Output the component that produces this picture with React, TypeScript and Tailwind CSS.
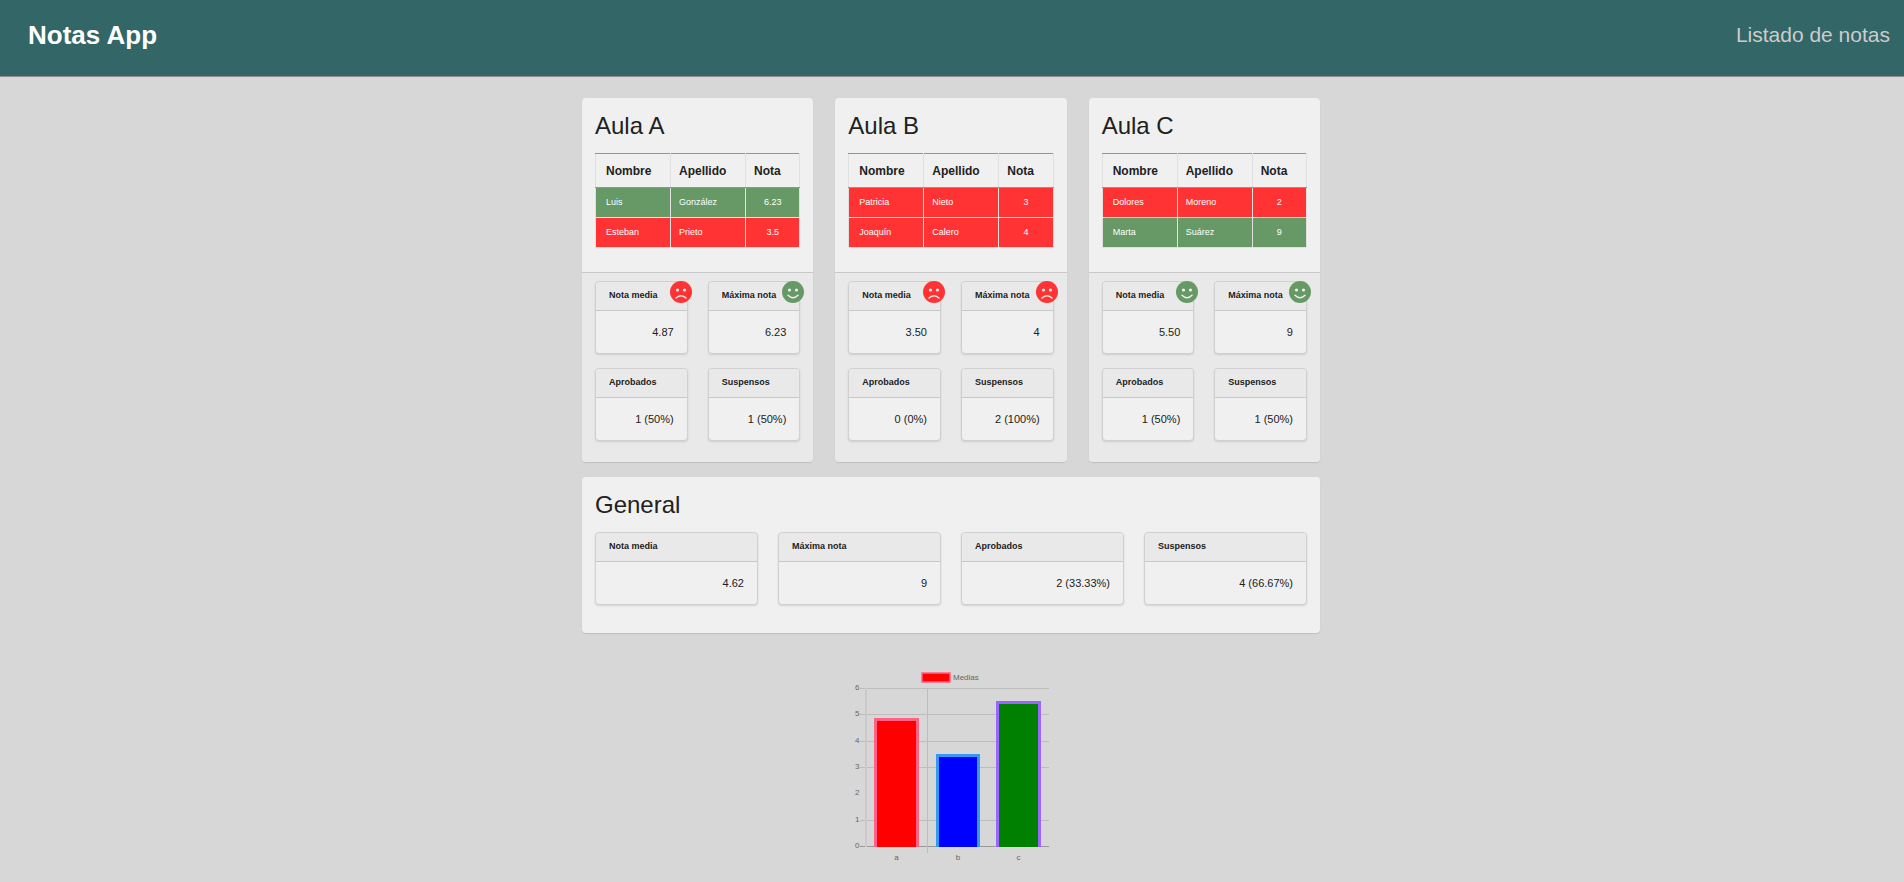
type Student = { name: string; surname: string; grade: number };
type Stat = { label: string; value: string; mood?: "happy" | "sad" };
type Classroom = { title: string; students: Student[]; stats: Stat[] };

const classrooms: Classroom[] = [
  {
    title: "Aula A",
    students: [
      { name: "Luis", surname: "González", grade: 6.23 },
      { name: "Esteban", surname: "Prieto", grade: 3.5 },
    ],
    stats: [
      { label: "Nota media", value: "4.87", mood: "sad" },
      { label: "Máxima nota", value: "6.23", mood: "happy" },
      { label: "Aprobados", value: "1 (50%)" },
      { label: "Suspensos", value: "1 (50%)" },
    ],
  },
  {
    title: "Aula B",
    students: [
      { name: "Patricia", surname: "Nieto", grade: 3 },
      { name: "Joaquín", surname: "Calero", grade: 4 },
    ],
    stats: [
      { label: "Nota media", value: "3.50", mood: "sad" },
      { label: "Máxima nota", value: "4", mood: "sad" },
      { label: "Aprobados", value: "0 (0%)" },
      { label: "Suspensos", value: "2 (100%)" },
    ],
  },
  {
    title: "Aula C",
    students: [
      { name: "Dolores", surname: "Moreno", grade: 2 },
      { name: "Marta", surname: "Suárez", grade: 9 },
    ],
    stats: [
      { label: "Nota media", value: "5.50", mood: "happy" },
      { label: "Máxima nota", value: "9", mood: "happy" },
      { label: "Aprobados", value: "1 (50%)" },
      { label: "Suspensos", value: "1 (50%)" },
    ],
  },
];

const generalStats: Stat[] = [
  { label: "Nota media", value: "4.62" },
  { label: "Máxima nota", value: "9" },
  { label: "Aprobados", value: "2 (33.33%)" },
  { label: "Suspensos", value: "4 (66.67%)" },
];

function Face({ mood }: { mood: "happy" | "sad" }) {
  const happy = mood === "happy";
  return (
    <svg
      viewBox="0 0 22 22"
      aria-hidden="true"
      className="absolute -top-px -right-[5px] size-[22px]"
    >
      <circle cx="11" cy="11" r="11" fill={happy ? "#669966" : "#ff3333"} />
      <circle cx="7.5" cy="9" r="1.6" fill="#f0f0f0" />
      <circle cx="14.5" cy="9" r="1.6" fill="#f0f0f0" />
      <path
        d={happy ? "M6 14.2Q11 19.2 16 14.2" : "M6 17Q11 12.4 16 17"}
        fill="none"
        stroke="#f0f0f0"
        strokeWidth="1.5"
        strokeLinecap="round"
      />
    </svg>
  );
}

function StatBox({ stat }: { stat: Stat }) {
  return (
    <div className="relative rounded border border-[#d0d0d0] bg-[#f0f0f0] shadow-[0_1px_2px_rgba(0,0,0,0.12)]">
      <h3 className="h-[29px] rounded-t border-b border-[#c8c8c8] bg-[#e9e9e9] pl-[13px] text-[9px] leading-[26px] font-bold whitespace-nowrap">
        {stat.label}
      </h3>
      <p className="h-[42px] pr-[13px] text-right text-[11px] leading-[42px]">{stat.value}</p>
      {stat.mood && <Face mood={stat.mood} />}
    </div>
  );
}

function StudentTable({ students }: { students: Student[] }) {
  return (
    <table className="w-full table-fixed border-collapse text-left">
      <thead>
        <tr className="h-[34px] text-[12px]">
          <th className="w-[75px] border border-[#e0e0e0] border-y-[#949494] pl-2.5 font-bold">Nombre</th>
          <th className="w-[75px] border border-[#e0e0e0] border-y-[#949494] pl-2 font-bold">Apellido</th>
          <th className="border border-[#e0e0e0] border-y-[#949494] pl-2 font-bold">Nota</th>
        </tr>
      </thead>
      <tbody className="text-[9px] text-white">
        {students.map((s) => (
          <tr key={s.name} className={s.grade >= 5 ? "h-[30px] bg-[#669966]" : "h-[30px] bg-[#ff3333]"}>
            <td className="border border-[#e0e0e0] pl-2.5">{s.name}</td>
            <td className="border border-[#e0e0e0] pl-2">{s.surname}</td>
            <td className="border border-[#e0e0e0] text-center">{s.grade}</td>
          </tr>
        ))}
      </tbody>
    </table>
  );
}

function ClassroomCard({ room }: { room: Classroom }) {
  return (
    <section className="overflow-hidden rounded bg-[#f0f0f0] shadow-[0_1px_1px_rgba(0,0,0,0.12)]">
      <div className="px-[13px] pt-3 pb-6">
        <h2 className="mb-3 text-[24px] leading-[31px]">{room.title}</h2>
        <StudentTable students={room.students} />
      </div>
      <div className="grid grid-cols-2 gap-x-5 gap-y-3.5 border-t border-[#c8c8c8] bg-[#e9e9e9] px-[13px] pt-2 pb-[21px]">
        {room.stats.map((s) => (
          <StatBox key={s.label} stat={s} />
        ))}
      </div>
    </section>
  );
}

const bars = [
  { label: "a", x: 24, top: 50, width: 45, fill: "#ff0000", stroke: "#ff6384" },
  { label: "b", x: 86, top: 86, width: 44, fill: "#0000ff", stroke: "#3399f5" },
  { label: "c", x: 146, top: 33, width: 45, fill: "#008000", stroke: "#9966ff" },
];
const ticks = [
  { label: "6", y: 20 },
  { label: "5", y: 46 },
  { label: "4", y: 73 },
  { label: "3", y: 99 },
  { label: "2", y: 125 },
  { label: "1", y: 152 },
  { label: "0", y: 178 },
];

function AveragesChart() {
  return (
    <svg
      viewBox="0 0 204 200"
      role="img"
      aria-label="Medias"
      className="mx-auto mt-[35px] block h-[200px] w-[204px] text-[8px]"
      fill="#666666"
    >
      <rect x="72" y="5" width="28" height="9" fill="#ff0000" stroke="#ff6384" strokeWidth="1.5" />
      <text x="103" y="12">Medias</text>
      {ticks.map((t) => (
        <g key={t.label}>
          {t.label !== "2" && (
            <rect x="10" y={t.y} width="189" height="1" fill={t.label === "0" ? "#999999" : "#bdbdbd"} />
          )}
          <text x="5" y={t.y + 2}>{t.label}</text>
        </g>
      ))}
      <rect x="15" y="20" width="2" height="159" fill="#cacaca" />
      <rect x="77" y="20" width="1" height="165" fill="#bdbdbd" />
      {bars.map((b) => (
        <g key={b.label}>
          <path d={`M${b.x} 179V${b.top}H${b.x + b.width}V179Z`} fill={b.stroke} />
          <rect x={b.x + 3} y={b.top + 3} width={b.width - 6} height={176 - b.top} fill={b.fill} />
          <text x={b.x + b.width / 2} y="192" textAnchor="middle">{b.label}</text>
        </g>
      ))}
    </svg>
  );
}

export default function App() {
  return (
    <div className="min-h-screen bg-[#d7d7d7] font-['Liberation_Sans',Arial,sans-serif] text-[#212121]">
      <header className="flex h-[77px] items-center justify-between border-b border-[#8c8c8c] bg-[#336666] pr-3.5 pb-1.5 pl-7">
        <h1 className="text-[26px] leading-8 font-bold text-white">Notas App</h1>
        <nav>
          <a href="#listado" className="text-[21px] leading-8 text-[#cccccc]">Listado de notas</a>
        </nav>
      </header>
      <main className="pt-[21px]">
        <div className="mx-auto max-w-[740px] pr-0.5">
          <div className="grid grid-cols-3 gap-[22px]">
            {classrooms.map((room) => (
              <ClassroomCard key={room.title} room={room} />
            ))}
          </div>
          <section className="mt-[15px] rounded bg-[#f0f0f0] px-[13px] pt-3 pb-7 shadow-[0_1px_1px_rgba(0,0,0,0.12)]">
            <h2 className="mb-3 text-[24px] leading-[31px]">General</h2>
            <div className="grid grid-cols-4 gap-5">
              {generalStats.map((s) => (
                <StatBox key={s.label} stat={s} />
              ))}
            </div>
          </section>
        </div>
        <AveragesChart />
      </main>
    </div>
  );
}
